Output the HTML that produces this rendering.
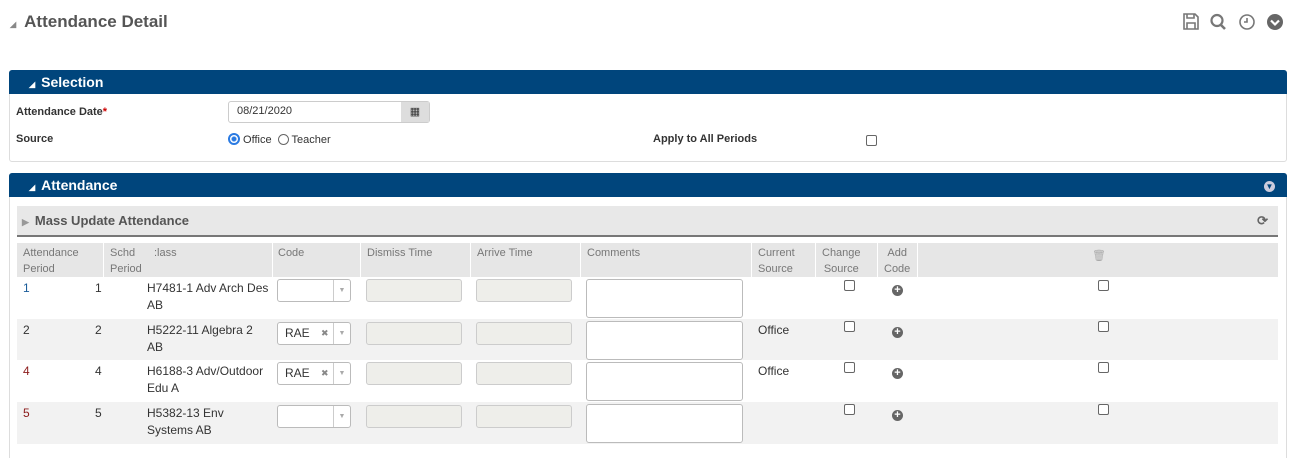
<!DOCTYPE html><html style="overflow:hidden;height:458px"><head><style>
body{margin:0;width:1295px;height:458px;background:#fff;font-family:"Liberation Sans",sans-serif;position:relative;overflow:hidden;font-size:12px;color:#333}
.a{position:absolute}
.hdr{background:#00457c;color:#fff;font-weight:bold;font-size:14px;height:24px;line-height:24px;padding-left:20px;border-radius:3px 3px 0 0}
.tri{font-size:8px;margin-right:6px}
.lbl{font-weight:bold;font-size:11px;color:#333}
.th{color:#777;font-size:11px;line-height:16px}
.in{background:#eeeeea;border:1px solid #ccc;border-radius:3px;height:21px;width:94px}
.ta{background:#fff;border:1px solid #bbb;border-radius:3px;width:155px;height:37px}
.sel{background:#fff;border:1px solid #bbb;border-radius:3px;width:72px;height:21px;font-size:12px;line-height:21px}
.sel span.dd{position:absolute;right:0;top:0;width:16px;height:21px;border-left:1px solid #ccc;color:#aaa;font-size:7px;text-align:center}
.cb{width:9px;height:9px;border:1px solid #666;border-radius:2px;background:#fff}
.plus{width:11px;height:11px;border-radius:50%;background:#666;color:#fff;font-size:11px;line-height:11px;text-align:center;font-weight:bold}
.c{font-size:12px;color:#333;line-height:17px}
</style></head><body>
<div class="a" style="left:10px;top:12px;font-size:17px;font-weight:bold;color:#555"><span style="font-size:8px;color:#888;margin-right:8px">◢</span>Attendance Detail</div>
<svg class="a" style="left:1182px;top:12px" width="104" height="20" viewBox="0 0 104 20">
<g fill="none" stroke="#777" stroke-width="1.6"><path d="M2 2h11l3 3v12H2z"/><path d="M5 2v4h7V2M5 17v-6h8v6"/>
<circle cx="35" cy="8.5" r="5.5" stroke-width="2.2"/><path d="M39 13l4 4" stroke-width="2.6"/>
<circle cx="65" cy="10" r="7"/><path d="M65 6v4h-3"/></g>
<circle cx="93" cy="10" r="8" fill="#666"/><path d="M89 8.5l4 4 4-4" stroke="#fff" stroke-width="2.2" fill="none"/></svg>

<div class="a" style="left:9px;top:70px;width:1276px;height:90px;border:1px solid #ddd;border-radius:3px"></div>
<div class="a hdr" style="left:9px;top:70px;width:1258px"><span class="tri">◢</span>Selection</div>
<div class="a lbl" style="left:16px;top:106px">Attendance Date<span style="color:#c00">*</span></div>
<div class="a" style="left:228px;top:101px;width:200px;height:20px;border:1px solid #ccc;border-radius:3px;background:#fff"><span style="position:absolute;left:8px;top:3px;font-size:11px">08/21/2020</span><div style="position:absolute;right:0;top:0;width:28px;height:20px;background:#ddd;text-align:center;font-size:11px;line-height:20px">▦</div></div>
<div class="a lbl" style="left:16px;top:133px">Source</div>
<div class="a" style="left:228px;top:133px;font-size:11px"><span style="display:inline-block;width:8px;height:8px;border-radius:50%;border:2px solid #2a7ae2;background:radial-gradient(#2a7ae2 2px,#fff 3px);vertical-align:-2px"></span> Office &nbsp;<span style="display:inline-block;width:9px;height:9px;border-radius:50%;border:1px solid #666;vertical-align:-2px"></span> Teacher</div>
<div class="a lbl" style="left:653px;top:133px">Apply to All Periods</div>
<div class="a cb" style="left:866px;top:135px"></div>

<div class="a" style="left:9px;top:173px;width:1276px;height:300px;border:1px solid #ddd;border-radius:3px"></div>
<div class="a hdr" style="left:9px;top:173px;width:1258px"><span class="tri">◢</span>Attendance</div>
<div class="a" style="left:1264px;top:181px;width:11px;height:11px;border-radius:50%;background:#ccd;color:#00457c;font-size:8px;text-align:center;line-height:11px">▼</div>
<div class="a" style="left:17px;top:206px;width:1261px;height:29px;background:#e8e8e8;border-bottom:2px solid #777;font-weight:bold;font-size:13px;color:#555;line-height:29px"><span style="font-size:9px;color:#999;margin:0 6px 0 5px">▶</span>Mass Update Attendance<span style="position:absolute;right:10px;font-size:13px;color:#666">⟳</span></div>

<div class="a" style="left:17px;top:243px;width:1261px;height:34px;background:#e6e6e6"></div>
<div class="a" style="left:17px;top:319px;width:1261px;height:41px;background:#f2f2f2"></div>
<div class="a" style="left:17px;top:402px;width:1261px;height:42px;background:#f2f2f2"></div>
<div class="a" style="left:103px;top:243px;width:1px;height:34px;background:#fff"></div>
<div class="a" style="left:272px;top:243px;width:1px;height:34px;background:#fff"></div>
<div class="a" style="left:360px;top:243px;width:1px;height:34px;background:#fff"></div>
<div class="a" style="left:470px;top:243px;width:1px;height:34px;background:#fff"></div>
<div class="a" style="left:580px;top:243px;width:1px;height:34px;background:#fff"></div>
<div class="a" style="left:751px;top:243px;width:1px;height:34px;background:#fff"></div>
<div class="a" style="left:815px;top:243px;width:1px;height:34px;background:#fff"></div>
<div class="a" style="left:877px;top:243px;width:1px;height:34px;background:#fff"></div>
<div class="a" style="left:917px;top:243px;width:1px;height:34px;background:#fff"></div>

<div class="a th" style="left:23px;top:245px">Attendance<br>Period</div>
<div class="a th" style="left:110px;top:245px">Schd<br>Period</div>
<div class="a th" style="left:154px;top:245px">:lass</div>
<div class="a th" style="left:278px;top:245px">Code</div>
<div class="a th" style="left:367px;top:245px">Dismiss Time</div>
<div class="a th" style="left:477px;top:245px">Arrive Time</div>
<div class="a th" style="left:587px;top:245px">Comments</div>
<div class="a th" style="left:758px;top:245px">Current<br>Source</div>
<div class="a th" style="left:822px;top:245px;text-align:center">Change<br>Source</div>
<div class="a th" style="left:884px;top:245px;text-align:center">Add<br>Code</div>
<div class="a" style="left:1092px;top:249px;color:#aaa;font-size:11px">🗑</div>

<div class="a c" style="left:23px;top:280px;color:#1a5c9a">1</div><div class="a c" style="left:95px;top:280px">1</div>
<div class="a c" style="left:147px;top:280px">H7481-1 Adv Arch Des<br>AB</div>
<div class="a sel" style="left:277px;top:279px"><span class="dd">▼</span></div>
<div class="a in" style="left:366px;top:279px"></div><div class="a in" style="left:476px;top:279px"></div>
<div class="a ta" style="left:586px;top:279px"></div>
<div class="a cb" style="left:844px;top:280px"></div><div class="a plus" style="left:892px;top:285px">+</div><div class="a cb" style="left:1098px;top:280px"></div>

<div class="a c" style="left:23px;top:322px">2</div><div class="a c" style="left:95px;top:322px">2</div>
<div class="a c" style="left:147px;top:322px">H5222-11 Algebra 2<br>AB</div>
<div class="a sel" style="left:277px;top:322px"><span style="margin-left:7px">RAE</span><span style="position:absolute;left:43px;color:#888;font-size:9px">✖</span><span class="dd">▼</span></div>
<div class="a in" style="left:366px;top:322px"></div><div class="a in" style="left:476px;top:322px"></div>
<div class="a ta" style="left:586px;top:321px"></div>
<div class="a c" style="left:758px;top:322px">Office</div>
<div class="a cb" style="left:844px;top:321px"></div><div class="a plus" style="left:892px;top:327px">+</div><div class="a cb" style="left:1098px;top:321px"></div>

<div class="a c" style="left:23px;top:363px;color:#8b1a1a">4</div><div class="a c" style="left:95px;top:363px">4</div>
<div class="a c" style="left:147px;top:363px">H6188-3 Adv/Outdoor<br>Edu A</div>
<div class="a sel" style="left:277px;top:362px"><span style="margin-left:7px">RAE</span><span style="position:absolute;left:43px;color:#888;font-size:9px">✖</span><span class="dd">▼</span></div>
<div class="a in" style="left:366px;top:362px"></div><div class="a in" style="left:476px;top:362px"></div>
<div class="a ta" style="left:586px;top:362px"></div>
<div class="a c" style="left:758px;top:363px">Office</div>
<div class="a cb" style="left:844px;top:362px"></div><div class="a plus" style="left:892px;top:368px">+</div><div class="a cb" style="left:1098px;top:362px"></div>

<div class="a c" style="left:23px;top:405px;color:#8b1a1a">5</div><div class="a c" style="left:95px;top:405px">5</div>
<div class="a c" style="left:147px;top:405px">H5382-13 Env<br>Systems AB</div>
<div class="a sel" style="left:277px;top:405px"><span class="dd">▼</span></div>
<div class="a in" style="left:366px;top:405px"></div><div class="a in" style="left:476px;top:405px"></div>
<div class="a ta" style="left:586px;top:404px"></div>
<div class="a cb" style="left:844px;top:404px"></div><div class="a plus" style="left:892px;top:410px">+</div><div class="a cb" style="left:1098px;top:404px"></div>
</body></html>
